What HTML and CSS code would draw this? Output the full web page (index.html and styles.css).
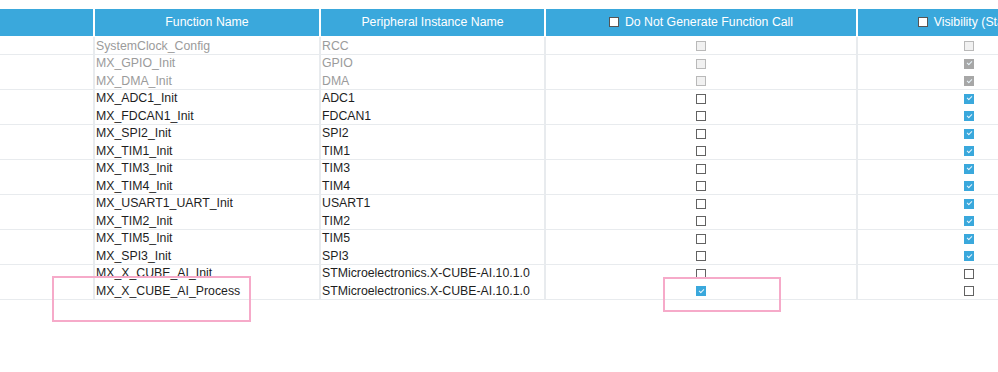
FILE: index.html
```html
<!DOCTYPE html>
<html lang="en">
<head>
    <meta charset="UTF-8">
    <title>Function Calls</title>
    <link rel="stylesheet" href="styles.css">
</head>
<body>
    <div class="table">
        <div class="row head">
            <div class="cell"></div>
            <div class="cell">Function Name</div>
            <div class="cell">Peripheral Instance Name</div>
            <div class="cell"><span class="cb hcb"></span>Do Not Generate Function Call</div>
            <div class="cell"><span class="cb hcb"></span>Visibility (Static)</div>
        </div>

        <div class="row dis">
            <div class="cell"></div>
            <div class="cell">SystemClock_Config</div>
            <div class="cell">RCC</div>
            <div class="cell mid"><span class="cb dim"></span></div>
            <div class="cell mid"><span class="cb dim"></span></div>
        </div>
        <div class="row dis">
            <div class="cell"></div>
            <div class="cell">MX_GPIO_Init</div>
            <div class="cell">GPIO</div>
            <div class="cell mid"><span class="cb dim"></span></div>
            <div class="cell mid"><span class="cb dim-on"></span></div>
        </div>
        <div class="row dis">
            <div class="cell"></div>
            <div class="cell">MX_DMA_Init</div>
            <div class="cell">DMA</div>
            <div class="cell mid"><span class="cb dim"></span></div>
            <div class="cell mid"><span class="cb dim-on"></span></div>
        </div>
        <div class="row">
            <div class="cell"></div>
            <div class="cell">MX_ADC1_Init</div>
            <div class="cell">ADC1</div>
            <div class="cell mid"><span class="cb"></span></div>
            <div class="cell mid"><span class="cb on"></span></div>
        </div>
        <div class="row">
            <div class="cell"></div>
            <div class="cell">MX_FDCAN1_Init</div>
            <div class="cell">FDCAN1</div>
            <div class="cell mid"><span class="cb"></span></div>
            <div class="cell mid"><span class="cb on"></span></div>
        </div>
        <div class="row">
            <div class="cell"></div>
            <div class="cell">MX_SPI2_Init</div>
            <div class="cell">SPI2</div>
            <div class="cell mid"><span class="cb"></span></div>
            <div class="cell mid"><span class="cb on"></span></div>
        </div>
        <div class="row">
            <div class="cell"></div>
            <div class="cell">MX_TIM1_Init</div>
            <div class="cell">TIM1</div>
            <div class="cell mid"><span class="cb"></span></div>
            <div class="cell mid"><span class="cb on"></span></div>
        </div>
        <div class="row">
            <div class="cell"></div>
            <div class="cell">MX_TIM3_Init</div>
            <div class="cell">TIM3</div>
            <div class="cell mid"><span class="cb"></span></div>
            <div class="cell mid"><span class="cb on"></span></div>
        </div>
        <div class="row">
            <div class="cell"></div>
            <div class="cell">MX_TIM4_Init</div>
            <div class="cell">TIM4</div>
            <div class="cell mid"><span class="cb"></span></div>
            <div class="cell mid"><span class="cb on"></span></div>
        </div>
        <div class="row">
            <div class="cell"></div>
            <div class="cell">MX_USART1_UART_Init</div>
            <div class="cell">USART1</div>
            <div class="cell mid"><span class="cb"></span></div>
            <div class="cell mid"><span class="cb on"></span></div>
        </div>
        <div class="row">
            <div class="cell"></div>
            <div class="cell">MX_TIM2_Init</div>
            <div class="cell">TIM2</div>
            <div class="cell mid"><span class="cb"></span></div>
            <div class="cell mid"><span class="cb on"></span></div>
        </div>
        <div class="row">
            <div class="cell"></div>
            <div class="cell">MX_TIM5_Init</div>
            <div class="cell">TIM5</div>
            <div class="cell mid"><span class="cb"></span></div>
            <div class="cell mid"><span class="cb on"></span></div>
        </div>
        <div class="row">
            <div class="cell"></div>
            <div class="cell">MX_SPI3_Init</div>
            <div class="cell">SPI3</div>
            <div class="cell mid"><span class="cb"></span></div>
            <div class="cell mid"><span class="cb on"></span></div>
        </div>
        <div class="row">
            <div class="cell"></div>
            <div class="cell">MX_X_CUBE_AI_Init</div>
            <div class="cell">STMicroelectronics.X-CUBE-AI.10.1.0</div>
            <div class="cell mid"><span class="cb"></span></div>
            <div class="cell mid"><span class="cb"></span></div>
        </div>
        <div class="row">
            <div class="cell"></div>
            <div class="cell">MX_X_CUBE_AI_Process</div>
            <div class="cell">STMicroelectronics.X-CUBE-AI.10.1.0</div>
            <div class="cell mid"><span class="cb on"></span></div>
            <div class="cell mid"><span class="cb"></span></div>
        </div>
    </div>

    <div class="mark mark-name"></div>
    <div class="mark mark-check"></div>
</body>
</html>
```

FILE: styles.css
```css
body {
    margin: 0;
    padding: 9px 0 0;
    font-family: 'Liberation Sans', Arial, sans-serif;
    font-size: 12.3px;
    color: #1e1e1e;
    background: #fff;
    overflow: hidden;
    position: relative;
    height: 372px;
    box-sizing: border-box;
}

.table {
    width: 1080px;
}

.row {
    display: grid;
    grid-template-columns: 93px 224px 223px 310px 222px;
    column-gap: 2px;
    height: 17.5px;
    padding-bottom: 2px;
    background: #e8ebee;
    box-sizing: border-box;
}

.cell {
    background: #fff;
    padding: 1.5px 0 0 1px;
    line-height: 15.5px;
    white-space: nowrap;
    box-sizing: border-box;
}

.row.head {
    height: 28px;
    padding-bottom: 1px;
    background: #fff;
}

.head .cell {
    background: #3aa8dc;
    color: #fff;
    display: flex;
    justify-content: center;
    align-items: center;
    gap: 6px;
    line-height: 27px;
    padding: 0;
    overflow: hidden;
}

.dis .cell {
    color: #9b9b9b;
}

.mid {
    display: flex;
    justify-content: center;
    align-items: center;
    padding: 1px 0 0;
}

.cb {
    position: relative;
    display: inline-block;
    width: 10px;
    height: 10px;
    border: 1.5px solid #626262;
    background: #fff;
    box-sizing: border-box;
}

.hcb {
    border-color: #555;
    margin-top: -1px;
}

.cb.dim {
    border-color: #b9b9b9;
    background: #f1f1f1;
}

.cb.on,
.cb.dim-on {
    border: none;
    background: #3aa8dc;
}

.cb.dim-on {
    background: #a7a7a7;
}

.cb.on::after,
.cb.dim-on::after {
    content: "";
    position: absolute;
    left: 2.5px;
    top: 2.5px;
    width: 4px;
    height: 2px;
    border-left: 1.3px solid #e8f4fb;
    border-bottom: 1.3px solid #e8f4fb;
    transform: rotate(-45deg);
}

.mark {
    position: absolute;
    border: 2px solid #f6aac9;
    box-sizing: border-box;
}

.mark-name {
    left: 52px;
    top: 276px;
    width: 199px;
    height: 46px;
}

.mark-check {
    left: 663px;
    top: 277px;
    width: 118px;
    height: 35px;
}
```
